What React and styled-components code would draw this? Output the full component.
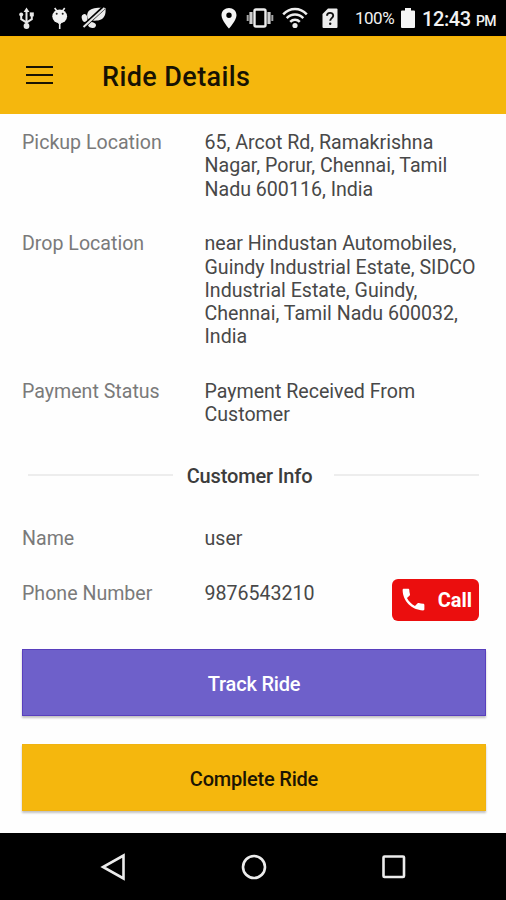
import React from 'react';
import styled, { createGlobalStyle } from 'styled-components';

const GlobalStyle = createGlobalStyle`
  * {
    box-sizing: border-box;
  }

  body {
    margin: 0;
    background: #fefefe;
    font-family: Roboto, 'Liberation Sans', sans-serif;
  }
`;

const Screen = styled.div`
  display: flex;
  flex-direction: column;
  width: 506px;
  height: 900px;
  background: #fefefe;
  overflow: hidden;
`;

const StatusBar = styled.header`
  display: flex;
  justify-content: space-between;
  align-items: center;
  height: 36px;
  padding: 0 10px 0 18px;
  background: #000;
  color: #f2f2f2;
`;

const StatusGroup = styled.div`
  display: flex;
  align-items: center;
  height: 36px;
`;

const StatusIcon = styled.svg`
  display: block;
  flex: none;
  width: ${props => props.$w}px;
  height: 24px;
  margin-right: ${props => props.$gap || 0}px;
`;

const Battery = styled.span`
  width: 39px;
  margin-right: 7px;
  font-size: 17px;
  letter-spacing: -0.5px;
  line-height: 36px;
  white-space: nowrap;
`;

const Clock = styled.span`
  width: 49px;
  margin-right: 5px;
  font-size: 20px;
  font-weight: 500;
  letter-spacing: -0.4px;
  line-height: 36px;
  white-space: nowrap;
  padding-top: 2px;
`;

const Meridiem = styled.span`
  width: 20px;
  font-size: 14px;
  font-weight: 500;
  letter-spacing: -0.6px;
  line-height: 36px;
  padding-top: 5px;
`;

const AppBar = styled.div`
  display: flex;
  align-items: center;
  height: 78px;
  padding: 0 27px 0 26px;
  background: #f5b70d;
  border-top: 1px solid #f9b200;
`;

const MenuButton = styled.button`
  display: flex;
  flex-direction: column;
  gap: 6px;
  width: 27px;
  margin: 0 49px 2px 0;
  padding: 0;
  border: 0;
  background: none;
`;

const MenuLine = styled.span`
  height: 2px;
  background: #1a1403;
`;

const Title = styled.h1`
  margin: 0;
  padding-top: 3px;
  font-size: 27px;
  font-weight: 500;
  line-height: 32px;
  letter-spacing: 0.4px;
  color: #171203;
`;

const Content = styled.main`
  display: flex;
  flex-direction: column;
  flex: 1;
  padding: 17px 20px 0 22px;
`;

const Details = styled.div`
  display: flex;
  flex-direction: column;
  gap: 31.5px;
`;

const Row = styled.div`
  display: grid;
  grid-template-columns: 182.5px 281.5px;
  font-size: 19.6px;
  line-height: 23.25px;
`;

const Label = styled.div`
  color: #7a7a7a;
`;

const Value = styled.div`
  color: #484848;
`;

const ContactLine = styled.div`
  display: flex;
  justify-content: space-between;
  height: 39px;
  padding-right: 7px;
`;

const SectionHeading = styled.div`
  display: flex;
  align-items: center;
  height: 24px;
  margin: 36.5px 7px 40px 6px;
`;

const Rule = styled.span`
  width: 145px;
  height: 2px;
  background: #ededed;
`;

const SectionTitle = styled.h2`
  flex: 1;
  margin: 0;
  padding: 1px 8px 0 0;
  font-size: 20px;
  font-weight: 500;
  line-height: 24px;
  letter-spacing: -0.15px;
  text-align: center;
  white-space: nowrap;
  color: #3c3c3c;
`;

const CallButton = styled.button`
  display: flex;
  justify-content: space-between;
  align-items: center;
  flex: none;
  width: 87px;
  height: 42px;
  margin-top: -3px;
  padding: 0 7px 0 7px;
  border: 0;
  border-radius: 6px;
  background: #eb0e0e;
  color: #fff;
  font-family: inherit;
  font-size: 20px;
  font-weight: 700;
`;

const Actions = styled.div`
  display: flex;
  flex-direction: column;
  gap: 28px;
  margin-top: 28px;
`;

const ActionButton = styled.button`
  height: 67px;
  padding: 3px 0 0;
  border: 1px solid ${props => (props.$primary ? '#f0b311' : '#583fbd')};
  background: ${props => (props.$primary ? '#f5b70d' : '#6e60ca')};
  box-shadow: 0 2px 2px rgba(0, 0, 0, 0.24);
  color: ${props => (props.$primary ? '#1c1503' : '#fff')};
  font-family: inherit;
  font-size: 20px;
  font-weight: 500;
  letter-spacing: -0.2px;
`;

const NavBar = styled.nav`
  display: flex;
  align-items: center;
  justify-content: space-between;
  height: 67px;
  padding: 0 98px 0 99px;
  background: #000;
`;

const NavIcon = styled.svg`
  display: block;
  width: 28px;
  height: 28px;
  fill: none;
  stroke: #ececec;
  stroke-width: 2.6;
`;

const trip = [
  { label: 'Pickup Location', value: '65, Arcot Rd, Ramakrishna Nagar, Porur, Chennai, Tamil Nadu 600116, India' },
  { label: 'Drop Location', value: 'near Hindustan Automobiles, Guindy Industrial Estate, SIDCO Industrial Estate, Guindy, Chennai, Tamil Nadu 600032, India' },
  { label: 'Payment Status', value: 'Payment Received From Customer' },
];

function UsbIcon() {
  return (
    <StatusIcon $w={18} $gap={15} viewBox="0 0 18 24" fill="none" stroke="#e8e8e8" strokeWidth="2">
      <path d="M8.5 4v17M3.2 8v5.2l5.3 3.3 5.3-3.3V8" />
      <path d="M8.5 1.6 11.4 6H5.6z" fill="#e8e8e8" stroke="none" />
      <circle cx="3.2" cy="8.4" r="2" fill="#e8e8e8" stroke="none" />
      <path d="M11.8 6.4h4v4h-4z" fill="#e8e8e8" stroke="none" />
      <circle cx="8.5" cy="20" r="2.9" fill="#e8e8e8" stroke="none" />
    </StatusIcon>
  );
}

function DebugIcon() {
  return (
    <StatusIcon $w={18} $gap={12} viewBox="0 0 18 24">
      <path d="M3.700 2l2.500 3.500M13.700 2l-2.500 3.500M8.700 16v7" stroke="#eee" strokeWidth="1.6" />
      <ellipse cx="8.7" cy="10.3" rx="7.4" ry="6.9" fill="#f2f2f2" />
      <circle cx="5.7" cy="7.8" r="1" fill="#222" />
      <circle cx="11.7" cy="7.8" r="1" fill="#222" />
      <path d="M6.5 15.5h4.400l-1 2.500H7.500z" fill="#eee" />
    </StatusIcon>
  );
}

function MutedIcon() {
  return (
    <StatusIcon $w={26} viewBox="0 0 26 24">
      <path d="M7 6c3-4 8-4.500 17.500-4 .5 5-.5 9.500-4.500 11.500-3 1.500-8 1.500-11.500.5C6 12.500 5.500 9 7 6z" fill="#ededed" />
      <ellipse cx="3.6" cy="12" rx="2.8" ry="4" transform="rotate(-15 3.6 12)" fill="#ededed" />
      <ellipse cx="11" cy="19" rx="4" ry="2.9" transform="rotate(15 11 19)" fill="#ededed" />
      <path d="M2.500 20.500 23 1.500" stroke="#000" strokeWidth="4.2" />
      <path d="M2.500 21 23.500 2" stroke="#e6e6e6" strokeWidth="2" />
    </StatusIcon>
  );
}

function PinIcon() {
  return (
    <StatusIcon $w={16} $gap={9} viewBox="0 0 16 24">
      <path fillRule="evenodd" d="M8 2C3.800 2 .5 5.100.5 9.200.5 14.200 8 22.500 8 22.500s7.500-8.300 7.500-13.300C15.500 5.100 12.200 2 8 2zm0 4.500a2.700 2.700 0 1 1 0 5.400 2.700 2.700 0 0 1 0-5.400z" fill="#f5f5f5" />
    </StatusIcon>
  );
}

function VibrateIcon() {
  return (
    <StatusIcon $w={28} $gap={8} viewBox="0 0 28 24">
      <rect x="8.5" y="3.5" width="11" height="17" rx="1.5" fill="none" stroke="#ededed" strokeWidth="2.4" />
      <path d="M1.7 9v6M26.3 9v6" stroke="#a5a5a5" strokeWidth="2" />
      <path d="M5 6v12M23 6v12" stroke="#cfcfcf" strokeWidth="3.2" />
    </StatusIcon>
  );
}

function WifiIcon() {
  return (
    <StatusIcon $w={26} $gap={14} viewBox="0 0 26 24" fill="none" stroke="#ededed" strokeWidth="2.5">
      <path d="M1.2 8.3C8 1.2 18 1.2 24.8 8.3" />
      <path d="M4.7 12.1C9.5 7.2 16.5 7.2 21.3 12.1" />
      <path d="M8.2 15.8C11 13 15 13 17.8 15.8" />
      <circle cx="13" cy="19.5" r="2.6" fill="#ededed" stroke="none" />
    </StatusIcon>
  );
}

function SimIcon() {
  return (
    <StatusIcon $w={16} $gap={17} viewBox="0 0 16 24">
      <path d="M6 2.5h8.500a1 1 0 0 1 1 1V21a1 1 0 0 1-1 1h-13a1 1 0 0 1-1-1V8z" fill="#ededed" />
      <path d="M5 9.800c0-3.900 6.200-3.900 6.200-.1 0 2.300-3 2.600-3 5.100" fill="none" stroke="#111" strokeWidth="1.9" />
      <circle cx="8.2" cy="17.7" r="1.2" fill="#111" />
    </StatusIcon>
  );
}

function BatteryIcon() {
  return (
    <StatusIcon $w={14} $gap={7} viewBox="0 0 14 24">
      <path d="M4 2h6v2.500h3a1 1 0 0 1 1 1V21a1 1 0 0 1-1 1H1a1 1 0 0 1-1-1V5.500a1 1 0 0 1 1-1h3z" fill="#f5f5f5" />
    </StatusIcon>
  );
}

function PhoneIcon() {
  return (
    <svg width="29" height="29" viewBox="0 0 24 24" fill="#fff">
      <path d="M6.620 10.790c1.440 2.830 3.760 5.140 6.590 6.590l2.200-2.200c.27-.27.67-.36 1.020-.24 1.120.37 2.330.57 3.570.57.55 0 1 .45 1 1V20c0 .55-.45 1-1 1-9.390 0-17-7.610-17-17 0-.55.45-1 1-1h3.500c.55 0 1 .45 1 1 0 1.250.2 2.450.57 3.570.11.35.03.74-.25 1.020l-2.200 2.200z" />
    </svg>
  );
}

function App() {
  return (
    <Screen>
      <GlobalStyle />
      <StatusBar>
        <StatusGroup>
          <UsbIcon />
          <DebugIcon />
          <MutedIcon />
        </StatusGroup>
        <StatusGroup>
          <PinIcon />
          <VibrateIcon />
          <WifiIcon />
          <SimIcon />
          <Battery>100%</Battery>
          <BatteryIcon />
          <Clock>12:43</Clock>
          <Meridiem>PM</Meridiem>
        </StatusGroup>
      </StatusBar>

      <AppBar>
        <MenuButton aria-label="Menu">
          <MenuLine />
          <MenuLine />
          <MenuLine />
        </MenuButton>
        <Title>Ride Details</Title>
      </AppBar>

      <Content>
        <Details>
          {trip.map(item => (
            <Row key={item.label}>
              <Label>{item.label}</Label>
              <Value>{item.value}</Value>
            </Row>
          ))}
        </Details>

        <SectionHeading>
          <Rule />
          <SectionTitle>Customer Info</SectionTitle>
          <Rule />
        </SectionHeading>

        <Details>
          <Row>
            <Label>Name</Label>
            <Value>user</Value>
          </Row>
          <Row>
            <Label>Phone Number</Label>
            <ContactLine>
              <Value>9876543210</Value>
              <CallButton>
                <PhoneIcon />
                Call
              </CallButton>
            </ContactLine>
          </Row>
        </Details>

        <Actions>
          <ActionButton>Track Ride</ActionButton>
          <ActionButton $primary>Complete Ride</ActionButton>
        </Actions>
      </Content>

      <NavBar>
        <NavIcon viewBox="0 0 28 28">
          <path d="M24.500 2.500v23L4 14z" />
        </NavIcon>
        <NavIcon viewBox="0 0 28 28">
          <circle cx="14" cy="14" r="11" />
        </NavIcon>
        <NavIcon viewBox="0 0 28 28">
          <rect x="3.5" y="3.5" width="20.5" height="20.5" rx="1" />
        </NavIcon>
      </NavBar>
    </Screen>
  );
}

export default App;
